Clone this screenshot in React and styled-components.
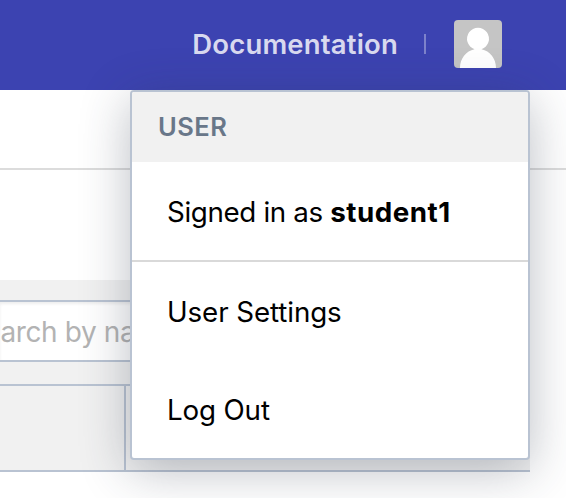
import React from "react";
import styled, { createGlobalStyle } from "styled-components";

const GlobalStyle = createGlobalStyle`
  * { box-sizing: border-box; }
  body { margin: 0; overflow: hidden; background: #fff; }
`;

const Page = styled.div`
  position: relative;
  display: flex;
  flex-direction: column;
  width: 566px;
  height: 498px;
  overflow: hidden;
  background: #fff;
  font-family: Inter, "Liberation Sans", sans-serif;
`;

const TopBar = styled.header`
  flex: none;
  display: flex;
  align-items: flex-start;
  justify-content: flex-end;
  height: 90px;
  padding: 20px 64px 0 0;
  background: #3c43b1;
`;

const DocsLink = styled.a`
  color: #d8d9ef;
  font-size: 27.5px;
  font-weight: 600;
  line-height: 49px;
  letter-spacing: 0.18px;
  white-space: nowrap;
`;

const Separator = styled.span`
  width: 2px;
  height: 20px;
  margin: 14px 28px 0 26px;
  background: #7d82cb;
`;

const AvatarImage = styled.svg`
  display: block;
  width: 48px;
  height: 48px;
  border-radius: 4px;
`;

const SubHeader = styled.div`
  flex: none;
  height: 80px;
  border-bottom: 2px solid #dcdcdc;
`;

const Content = styled.main`
  flex: none;
  width: 530px;
  padding-top: 110px;
`;

const Panel = styled.section`
  padding-top: 20px;
  background: #f1f1f1;
`;

const SearchBox = styled.div`
  height: 62px;
  border: solid #b9c3d2;
  border-width: 2px 0;
  background: #fff;
  box-shadow: inset 0 2px 3px rgba(0, 0, 0, 0.07);
  color: #b3b3b3;
  font-size: 28px;
  line-height: 61px;
  letter-spacing: -0.4px;
  text-indent: 0.5px;
  white-space: nowrap;
`;

const TableHead = styled.div`
  display: flex;
  height: 88px;
  margin-top: 22px;
  border: solid #b9c3d2;
  border-width: 2px 0;
`;

const HeadCell = styled.div`
  width: 126px;
  border-right: 2px solid #b9c3d2;
`;

const Menu = styled.div`
  position: absolute;
  top: 90px;
  left: 130px;
  display: flex;
  flex-direction: column;
  width: 400px;
  height: 370px;
  overflow: hidden;
  border: 2px solid #b9c3d2;
  border-radius: 4px;
  background: #fff;
  box-shadow: 0 10px 50px rgba(42, 52, 72, 0.32);
`;

const MenuHeading = styled.div`
  flex: none;
  height: 70px;
  padding-left: 26px;
  background: #f1f1f1;
  color: #697789;
  font-size: 25.5px;
  font-weight: 600;
  line-height: 69px;
  letter-spacing: 0.5px;
`;

const MenuItem = styled.div`
  flex: none;
  height: ${(p) => p.$height}px;
  padding-left: 35px;
  border-bottom: ${(p) => (p.$divided ? "2px solid #d9d9d9" : "none")};
  color: #000;
  font-size: 27.75px;
  line-height: 101px;
  letter-spacing: ${(p) => p.$spacing}px;
  white-space: nowrap;
`;

const UserName = styled.strong`
  font-weight: 700;
  letter-spacing: 0.5px;
`;

function Avatar() {
  return (
    <AvatarImage viewBox="0 0 48 48" aria-label="User">
      <rect width="48" height="48" fill="#c5c5c5" />
      <path
        fill="#fff"
        d="M20.5 29.2A11 11 0 1 1 27.5 29.2C36 31 42 38.5 42 48H6C6 38.5 12 31 20.5 29.2Z"
      />
    </AvatarImage>
  );
}

export default function App() {
  return (
    <Page>
      <GlobalStyle />
      <TopBar>
        <DocsLink>Documentation</DocsLink>
        <Separator />
        <Avatar />
      </TopBar>
      <SubHeader />
      <Content>
        <Panel>
          <SearchBox>arch by name</SearchBox>
          <TableHead>
            <HeadCell />
          </TableHead>
        </Panel>
      </Content>
      <Menu>
        <MenuHeading>USER</MenuHeading>
        <MenuItem $height={100} $spacing={-0.35} $divided>
          Signed in as <UserName>student1</UserName>
        </MenuItem>
        <MenuItem $height={98} $spacing={-0.1}>User Settings</MenuItem>
        <MenuItem $height={98} $spacing={-0.15}>Log Out</MenuItem>
      </Menu>
    </Page>
  );
}
